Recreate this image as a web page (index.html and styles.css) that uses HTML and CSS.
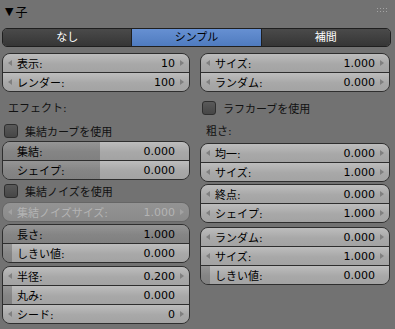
FILE: index.html
```html
<!DOCTYPE html>
<html>
	<head>
		<meta charset="UTF-8">
		<title>子</title>
		<link rel="stylesheet" href="styles.css">
	</head>
	<body>
		<div class="panel">
			<div class="head">
				<span class="tri">▼</span><span class="ttl">子</span>
				<svg class="grip" width="12" height="6" viewBox="0 0 12 6">
					<rect x="0" y="0" width="1" height="1"/><rect x="3" y="0" width="1" height="1"/><rect x="6" y="0" width="1" height="1"/><rect x="9" y="0" width="1" height="1"/>
					<rect x="0" y="3" width="1" height="1"/><rect x="3" y="3" width="1" height="1"/><rect x="6" y="3" width="1" height="1"/><rect x="9" y="3" width="1" height="1"/>
				</svg>
			</div>
			<div class="tabs">
				<div class="tab">なし</div>
				<div class="tab on">シンプル</div>
				<div class="tab">補間</div>
			</div>
			<div class="cols">
				<div class="col left">
					<div class="box">
						<div class="row"><i class="al"></i><span>表示:</span><span class="val">10</span><i class="ar"></i></div>
						<div class="row"><i class="al"></i><span>レンダー:</span><span class="val">100</span><i class="ar"></i></div>
					</div>
					<div class="lbl m7">エフェクト:</div>
					<div class="chk m2"><i class="cb"></i>集結カーブを使用</div>
					<div class="box">
						<div class="row sl" style="--fill:52%"><span>集結:</span><span class="val">0.000</span></div>
						<div class="row sl" style="--fill:52%"><span>シェイプ:</span><span class="val">0.000</span></div>
					</div>
					<div class="chk m1"><i class="cb"></i>集結ノイズを使用</div>
					<div class="box dis m1">
						<div class="row"><i class="al"></i><span>集結ノイズサイズ:</span><span class="val">1.000</span><i class="ar"></i></div>
					</div>
					<div class="box m2">
						<div class="row sl" style="--fill:100%"><span>長さ:</span><span class="val">1.000</span></div>
						<div class="row sl" style="--fill:5%"><span>しきい値:</span><span class="val">0.000</span></div>
					</div>
					<div class="box m3">
						<div class="row"><i class="al"></i><span>半径:</span><span class="val">0.200</span><i class="ar"></i></div>
						<div class="row sl" style="--fill:5%"><span>丸み:</span><span class="val">0.000</span></div>
						<div class="row"><i class="al"></i><span>シード:</span><span class="val">0</span><i class="ar"></i></div>
					</div>
				</div>
				<div class="col right">
					<div class="box">
						<div class="row"><i class="al"></i><span>サイズ:</span><span class="val">1.000</span><i class="ar"></i></div>
						<div class="row"><i class="al"></i><span>ランダム:</span><span class="val">0.000</span><i class="ar"></i></div>
					</div>
					<div class="chk m6"><i class="cb"></i>ラフカーブを使用</div>
					<div class="lbl m4">粗さ:</div>
					<div class="box m1">
						<div class="row"><i class="al"></i><span>均一:</span><span class="val">0.000</span><i class="ar"></i></div>
						<div class="row"><i class="al"></i><span>サイズ:</span><span class="val">1.000</span><i class="ar"></i></div>
					</div>
					<div class="box m2">
						<div class="row"><i class="al"></i><span>終点:</span><span class="val">0.000</span><i class="ar"></i></div>
						<div class="row"><i class="al"></i><span>シェイプ:</span><span class="val">1.000</span><i class="ar"></i></div>
					</div>
					<div class="box m4">
						<div class="row"><i class="al"></i><span>ランダム:</span><span class="val">0.000</span><i class="ar"></i></div>
						<div class="row"><i class="al"></i><span>サイズ:</span><span class="val">1.000</span><i class="ar"></i></div>
						<div class="row sl" style="--fill:5%"><span>しきい値:</span><span class="val">0.000</span></div>
					</div>
				</div>
			</div>
		</div>
	</body>
</html>
```
FILE: styles.css
```css
*{
	padding: 0;
	margin: 0;
	box-sizing: border-box;
}
body{
	width: 395px;
	height: 329px;
	overflow: hidden;
	background-color: #727272;
	font: 11px "DejaVu Sans", "Noto Sans CJK JP", sans-serif;
	color: #000;
}
.head{
	height: 22px;
	display: flex;
	align-items: center;
	padding: 0 6px 0 5px;
}
.head .tri{
	font-size: 11px;
	margin-right: 2px;
}
.head .ttl{
	font-size: 12px;
}
.grip{
	margin-left: auto;
	fill: #a4a4a4;
}
.tabs{
	display: flex;
	height: 19px;
	margin: 6px 4px 0 2px;
	border: 1px solid #1f1f1f;
	border-radius: 5px;
	overflow: hidden;
}
.tab{
	flex: 1;
	text-align: center;
	line-height: 17px;
	color: #fff;
	background: linear-gradient(#4a4a4a, #363636);
}
.tab + .tab{
	border-left: 1px solid #1f1f1f;
}
.tab.on{
	background: linear-gradient(#6690d2, #4f7bbf);
	color: #000;
}
.cols{
	display: flex;
	gap: 10px;
	padding: 0 5px 0 2px;
	margin-top: 6px;
}
.left{
	width: 188px;
}
.right{
	flex: 1;
}
.box{
	border: 1px solid #2e2e2e;
	border-radius: 8px;
	overflow: hidden;
}
.row{
	--fill: 0%;
	box-sizing: content-box;
	height: 18px;
	display: flex;
	align-items: center;
	padding: 0 5px;
	background:
		linear-gradient(to right, rgba(0,0,0,0.21) var(--fill), transparent var(--fill)),
		linear-gradient(#bdbdbd, #a8a8a8 55%, #a3a3a3);
}
.row + .row{
	border-top: 1px solid #2e2e2e;
}
.row.sl{
	padding: 0 14px;
}
.val{
	margin-left: auto;
}
.al, .ar{
	width: 0;
	height: 0;
	border-top: 3px solid transparent;
	border-bottom: 3px solid transparent;
}
.al{
	border-right: 4px solid #808080;
	margin-right: 5px;
}
.ar{
	border-left: 4px solid #808080;
	margin-left: 5px;
}
.dis{
	border-color: #666;
}
.dis .row{
	background: linear-gradient(#939393, #8a8a8a);
	color: #b4b4b4;
}
.dis .al{
	border-right-color: #a2a2a2;
}
.dis .ar{
	border-left-color: #a2a2a2;
}
.lbl{
	height: 20px;
	line-height: 20px;
	padding-left: 6px;
	color: #111;
}
.chk{
	height: 20px;
	display: flex;
	align-items: center;
	gap: 7px;
	padding-left: 2px;
	color: #111;
}
.cb{
	width: 14px;
	height: 14px;
	border: 1px solid #2e2e2e;
	border-radius: 3px;
	background: linear-gradient(#595959, #464646);
}
.m1{ margin-top: 1px; }
.m2{ margin-top: 2px; }
.m3{ margin-top: 3px; }
.m4{ margin-top: 4px; }
.m6{ margin-top: 6px; }
.m7{ margin-top: 7px; }
```
